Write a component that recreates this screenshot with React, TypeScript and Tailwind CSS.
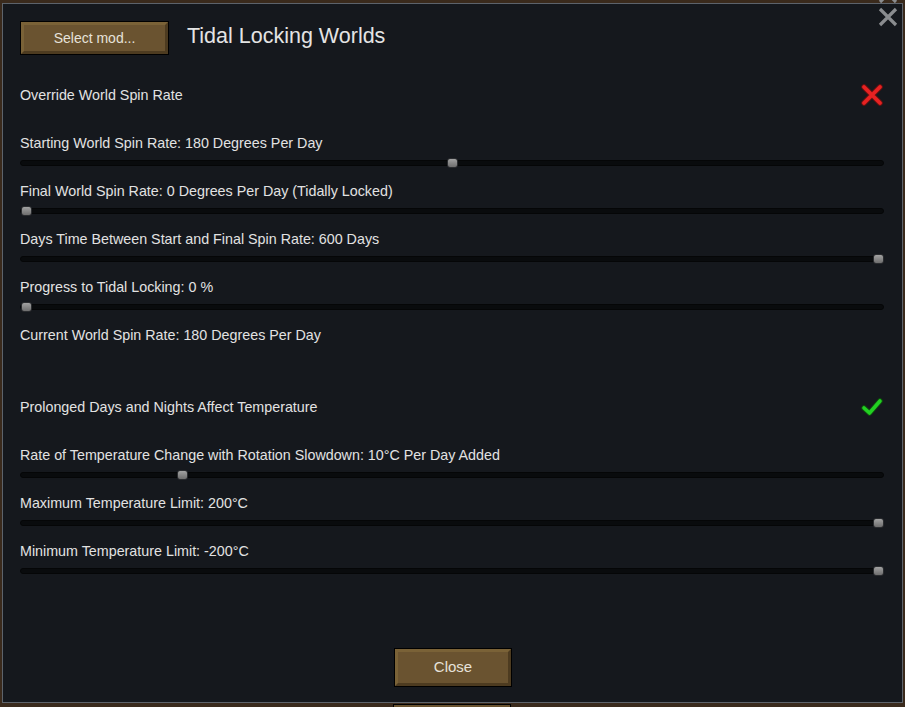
import React from "react";

const font = { fontFamily: '"Liberation Sans", Arial, sans-serif' };

function Btn({ label, w, h, text }: { label: string; w: string; h: string; text: string }) {
  return (
    <div className={`${w} ${h} border border-black bg-[#6a5330] flex`}>
      <div className={`flex-1 flex items-center justify-center border-[3px] border-t-[#7a6237] border-l-[#7a6237] border-b-[#4d3b20] border-r-[#4d3b20] ${text} text-[#e6e2da]`}>
        {label}
      </div>
    </div>
  );
}

function Slider({ label, value }: { label: string; value: number }) {
  return (
    <div className="h-[48px] flex flex-col">
      <div className="h-[20px] pt-[2px] text-[14.3px] leading-[17px] text-[#e2e2e2]">{label}</div>
      <div className="relative h-[18px] mt-[1px]">
        <div className="absolute left-0 right-0 top-[6px] h-[6px] rounded-full bg-[#090b0d] border border-[#050607]" />
        <div
          className="absolute top-[4px] w-[11px] h-[10px] rounded-[3px] border border-[#2a2c2f] bg-gradient-to-b from-[#a2a2a2] to-[#6e6e6e]"
          style={{ left: `calc(${value} * (100% - 12px) + 1px)` }}
        />
      </div>
    </div>
  );
}

function Toggle({ label, on }: { label: string; on: boolean }) {
  return (
    <div className="h-[48px] flex items-start justify-between">
      <div className="h-[20px] pt-[2px] text-[14.3px] leading-[17px] text-[#e2e2e2]">{label}</div>
      <div className="mr-[1px] -mt-[1px]">
        {on ? (
          <svg width="22" height="22" viewBox="0 0 22 22">
            <path d="M3 12 L8.5 17 L19 5" fill="none" stroke="#0f4d0f" strokeWidth="5.5" strokeLinecap="round" strokeLinejoin="round" />
            <path d="M3 12 L8.5 17 L19 5" fill="none" stroke="#22d022" strokeWidth="3.6" strokeLinecap="round" strokeLinejoin="round" />
          </svg>
        ) : (
          <svg width="22" height="22" viewBox="0 0 22 22">
            <path d="M3 3 L19 19 M19 3 L3 19" fill="none" stroke="#6a1010" strokeWidth="5.5" strokeLinecap="round" />
            <path d="M3 3 L19 19 M19 3 L3 19" fill="none" stroke="#e62222" strokeWidth="3.8" strokeLinecap="round" />
          </svg>
        )}
      </div>
    </div>
  );
}

export default function App() {
  return (
    <div className="w-[905px] h-[707px] overflow-hidden bg-[#3a2a1c] pl-[2px] pt-[3px] relative" style={font}>
      <div className="absolute right-[7px] -top-[16px]">
        <svg width="20" height="20" viewBox="0 0 20 20">
          <path d="M2 2 L18 18 M18 2 L2 18" stroke="#8a8c8f" strokeWidth="3.2" />
        </svg>
      </div>
      <div className="w-[901px] h-[700px] border border-[#5d636b] bg-[#15181d] relative flex flex-col pl-[17px] pr-[18px] pt-[17px]">
        <div className="absolute right-[4px] top-[3px]">
          <svg width="20" height="20" viewBox="0 0 20 20">
            <path d="M2 2 L18 18 M18 2 L2 18" stroke="#8a8c8f" strokeWidth="3.2" />
          </svg>
        </div>
        <div className="flex items-center h-[34px]">
          <Btn label="Select mod..." w="w-[149px]" h="h-[34px]" text="text-[14px]" />
          <div className="ml-[18px] text-[21.5px] text-[#e4e4e4] -mt-[3px]">Tidal Locking Worlds</div>
        </div>
        <div className="mt-[30px] flex flex-col">
          <Toggle label="Override World Spin Rate" on={false} />
          <Slider label="Starting World Spin Rate: 180 Degrees Per Day" value={0.5} />
          <Slider label="Final World Spin Rate: 0 Degrees Per Day (Tidally Locked)" value={0} />
          <Slider label="Days Time Between Start and Final Spin Rate: 600 Days" value={1} />
          <Slider label="Progress to Tidal Locking: 0 %" value={0} />
          <div className="h-[48px]">
            <div className="h-[20px] pt-[2px] text-[14.3px] leading-[17px] text-[#e2e2e2]">Current World Spin Rate: 180 Degrees Per Day</div>
          </div>
          <div className="h-[24px]" />
          <Toggle label="Prolonged Days and Nights Affect Temperature" on={true} />
          <Slider label="Rate of Temperature Change with Rotation Slowdown: 10°C Per Day Added" value={0.183} />
          <Slider label="Maximum Temperature Limit: 200°C" value={1} />
          <Slider label="Minimum Temperature Limit: -200°C" value={1} />
        </div>
        <div className="flex-1" />
        <div className="flex justify-center pb-[15px] pl-[2px]">
          <Btn label="Close" w="w-[118px]" h="h-[39px]" text="text-[15px]" />
        </div>
      </div>
      <div className="absolute left-[393px] top-[704px] w-[118px] h-[10px] border border-black bg-[#6a5330]" />
    </div>
  );
}
